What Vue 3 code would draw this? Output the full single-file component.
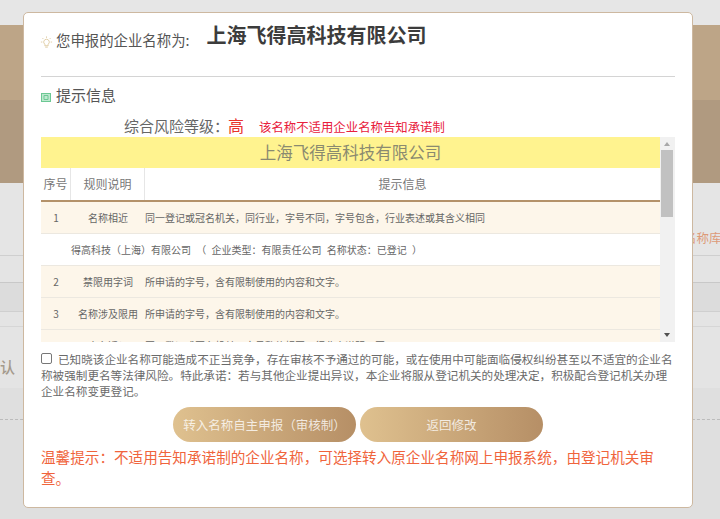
<template>
  <div class="page">
    <div class="bg-top"></div>
    <div class="bg-hero">
      <div class="hero-a"></div>
      <div class="hero-b"></div>
    </div>
    <div class="bg-title">名称库</div>
    <div class="bg-band"></div>
    <div class="bg-gap"></div>
    <div class="bg-confirm">确认</div>
    <div class="bg-foot"></div>

    <div class="modal">
      <div class="name-row">
        <svg class="bulb" width="13" height="13" viewBox="0 0 14 14" fill="none" stroke="#dfcba2" stroke-width="1">
          <path d="M7 3.5a3 3 0 0 1 1.8 5.4V10.5H5.2V8.9A3 3 0 0 1 7 3.5z" />
          <path d="M5.6 12h2.8M7 0.5v1.5M1 6.5h1.5M11.5 6.5H13M2.6 2.2l1 1M11.4 2.2l-1 1" />
        </svg>
        <span class="name-label">您申报的企业名称为:</span>
        <span class="name-value">上海飞得高科技有限公司</span>
      </div>

      <div class="tip-head">
        <svg class="tip-icon" width="10" height="9" viewBox="0 0 10 9">
          <rect x="0.5" y="0.5" width="9" height="8" fill="#bfe9d0" stroke="#6cc894" />
          <path d="M3 2.5h4v4H3z" fill="none" stroke="#6cc894" />
        </svg>
        <span>提示信息</span>
      </div>

      <div class="risk">
        <span class="risk-label">综合风险等级：</span>
        <span class="risk-level">高</span>
        <span class="risk-note">该名称不适用企业名称告知承诺制</span>
      </div>

      <div class="table-wrap">
        <div class="table-view">
          <div class="table-title">上海飞得高科技有限公司</div>
          <div class="table-head">
            <div class="col-no">序号</div>
            <div class="col-rule">规则说明</div>
            <div class="col-info">提示信息</div>
          </div>
          <template v-for="row in rows" :key="row.text">
            <div v-if="row.no" class="table-row">
              <div class="col-no">{{ row.no }}</div>
              <div class="col-rule">{{ row.rule }}</div>
              <div class="col-text">{{ row.text }}</div>
            </div>
            <div v-else class="table-row plain">{{ row.text }}</div>
          </template>
        </div>
        <div class="scrollbar">
          <span class="arrow-up"></span>
          <span class="thumb"></span>
          <span class="arrow-down"></span>
        </div>
      </div>

      <p class="promise">
        <span class="check"></span>已知晓该企业名称可能造成不正当竞争，存在审核不予通过的可能，或在使用中可能面临侵权纠纷甚至以不适宜的企业名称被强制更名等法律风险。特此承诺：若与其他企业提出异议，本企业将服从登记机关的处理决定，积极配合登记机关办理企业名称变更登记。
      </p>

      <div class="actions">
        <button class="btn">转入名称自主申报（审核制）</button>
        <button class="btn">返回修改</button>
      </div>

      <p class="warm">温馨提示：不适用告知承诺制的企业名称，可选择转入原企业名称网上申报系统，由登记机关审查。</p>
    </div>
  </div>
</template>

<script setup>
const rows = [
  { no: 1, rule: '名称相近', text: '同一登记或冠名机关，同行业，字号不同，字号包含，行业表述或其含义相同' },
  { text: '得高科技（上海）有限公司 （ 企业类型：有限责任公司 名称状态：已登记 ）' },
  { no: 2, rule: '禁限用字词', text: '所申请的字号，含有限制使用的内容和文字。' },
  { no: 3, rule: '名称涉及限用', text: '所申请的字号，含有限制使用的内容和文字。' },
  { no: 4, rule: '人名近似', text: '同一登记或冠名机关，字号整体相同，行业未说明不同' }
]
</script>

<style>
html,
body {
  margin: 0;
  overflow: hidden;
}
</style>

<style scoped>
.page {
  position: relative;
  width: 720px;
  height: 519px;
  overflow: hidden;
  background: #e4e4e4;
  font-family: "Noto Sans CJK SC", "Liberation Sans", sans-serif;
  text-spacing-trim: space-all;
}

.bg-top {
  height: 25px;
  background: #e6e6e6;
}

.hero-a {
  height: 75px;
  background: #bda587;
}

.hero-b {
  height: 83px;
  background: #b09a80;
}

.bg-title {
  height: 73px;
  box-sizing: border-box;
  border-bottom: 1px solid #cfcfcf;
  padding: 45px 0 0 684px;
  font-size: 12.5px;
  line-height: 20px;
  white-space: nowrap;
  color: #dd9a78;
  background: #e5e5e5;
}

.bg-band {
  height: 30px;
  margin-top: 26px;
  border-top: 1px solid #c8c8c8;
  border-bottom: 1px solid #cfcfcf;
  box-sizing: border-box;
  background: #dcdcdc;
}

.bg-gap {
  height: 14px;
  border-bottom: 1px solid #d6d6d6;
  background: #e4e4e4;
}

.bg-confirm {
  height: 61px;
  box-sizing: border-box;
  padding-top: 30px;
  margin-left: -15px;
  font-size: 15px;
  font-weight: 500;
  line-height: 20px;
  color: #a49a8c;
  background: #e4e4e4;
}

.bg-foot {
  position: relative;
  height: 131px;
  background: #dfdfdf;
}

.bg-foot::after {
  content: "";
  position: absolute;
  left: 0;
  right: 0;
  top: 31px;
  border-top: 1px dashed #bbb;
}

.modal {
  position: absolute;
  left: 23px;
  top: 12px;
  width: 670px;
  height: 496px;
  box-sizing: border-box;
  padding: 0 17px;
  background: #fff;
  border: 1px solid #cdb8a0;
  border-radius: 5px;
  color: #555;
}

.name-row {
  display: flex;
  align-items: flex-start;
  height: 63px;
  border-bottom: 1px solid #d4d4d4;
}

.bulb {
  margin: 23px 3px 0 -1px;
  flex: none;
}

.name-label {
  margin-top: 17px;
  font-size: 14.4px;
  line-height: 20px;
  color: #555;
}

.name-value {
  margin: 8px 0 0 17px;
  font-size: 20px;
  line-height: 28px;
  font-weight: 700;
  color: #3c3c3c;
}

.tip-head {
  display: flex;
  align-items: center;
  height: 38px;
  box-sizing: border-box;
  padding-bottom: 3px;
  font-size: 15px;
  color: #555;
}

.tip-icon {
  margin: 5px 5px 0 0;
}

.risk {
  display: flex;
  align-items: baseline;
  height: 22px;
  padding-left: 83px;
  line-height: 20px;
}

.risk-label {
  font-size: 15px;
  color: #666;
}

.risk-level {
  margin-left: -1px;
  font-size: 16px;
  color: #e8342c;
}

.risk-note {
  margin-left: 15px;
  font-size: 12.4px;
  color: #e8203c;
}

.table-wrap {
  display: flex;
  width: 634px;
  height: 205px;
}

.table-view {
  width: 619px;
  overflow: hidden;
  font-size: 10px;
  color: #666;
}

.table-title {
  height: 31px;
  line-height: 31px;
  text-align: center;
  font-size: 16.5px;
  color: #8a8a70;
  background: #fff38f;
}

.table-head {
  display: flex;
  height: 34px;
  box-sizing: border-box;
  border-bottom: 2px solid #b4926a;
  line-height: 32px;
  font-size: 12px;
  color: #777;
}

.table-head .col-no,
.table-head .col-rule {
  box-sizing: border-box;
  border-right: 1px solid #e6e6e6;
}

.col-no {
  width: 30px;
  flex: none;
  text-align: center;
}

.col-rule {
  width: 74px;
  flex: none;
  text-align: center;
}

.col-info {
  flex: 1;
  text-align: center;
}

.col-text {
  flex: 1;
}

.table-row {
  display: flex;
  height: 32px;
  box-sizing: border-box;
  border-bottom: 1px solid #ece8e0;
  line-height: 31px;
  background: #fdf6ea;
}

.table-row.plain {
  padding-left: 30px;
  word-spacing: 3px;
  white-space: pre;
  background: #fff;
}

.scrollbar {
  position: relative;
  width: 15px;
  background: #f1f1f1;
}

.arrow-up,
.arrow-down {
  position: absolute;
  left: 4px;
  border-left: 3.5px solid transparent;
  border-right: 3.5px solid transparent;
}

.arrow-up {
  top: 5px;
  border-bottom: 4px solid #a8a8a8;
}

.arrow-down {
  bottom: 5px;
  border-top: 4px solid #505050;
}

.thumb {
  position: absolute;
  left: 1px;
  right: 2px;
  top: 13px;
  height: 67px;
  background: #c1c1c1;
}

.promise {
  margin: 9px 0 0;
  font-size: 11.6px;
  line-height: 16px;
  color: #6a6a6a;
}

.check {
  display: inline-block;
  width: 9px;
  height: 9px;
  margin-right: 6px;
  border: 1px solid #777;
  border-radius: 2px;
  vertical-align: 0;
}

.actions {
  display: flex;
  gap: 4px;
  margin: 8px 0 0 132px;
}

.btn {
  width: 183px;
  height: 35px;
  padding: 0;
  border: 0;
  border-radius: 18px;
  font-family: inherit;
  font-size: 12.5px;
  color: rgba(255, 255, 255, 0.78);
  background: linear-gradient(90deg, #dfc18f, #b68f66);
}

.warm {
  margin: 4px 0 0;
  font-size: 14.6px;
  line-height: 21px;
  color: #f0643c;
}
</style>
